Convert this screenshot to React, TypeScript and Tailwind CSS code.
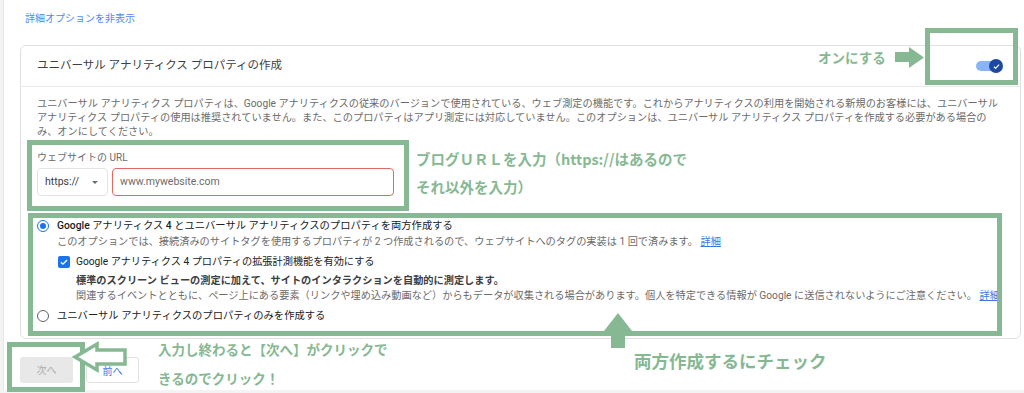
import React from "react";

const GREEN = "#86b893";

function GreenBox({ className }: { className: string }) {
  return <div className={`pointer-events-none absolute border-[5px] border-[#86b893] ${className}`} />;
}

function Radio({ checked }: { checked: boolean }) {
  return checked ? (
    <span className="flex h-[12px] w-[12px] shrink-0 items-center justify-center rounded-full border-[1.5px] border-[#1a73e8]">
      <span className="h-[6px] w-[6px] rounded-full bg-[#1a73e8]" />
    </span>
  ) : (
    <span className="h-[12px] w-[12px] shrink-0 rounded-full border-[1.5px] border-[#5f6368]" />
  );
}

export default function App() {
  return (
    <div
      className="relative h-[393px] w-[1024px] overflow-hidden bg-[#f3f3f3]"
      style={{ fontFamily: "Roboto, 'Noto Sans CJK JP', sans-serif" }}
    >
      <div className="ml-[3px] h-[390px] border-l border-[#e6e6e6] bg-white">
        <div className="pl-[21px] pt-[13px] text-[10px] leading-[12px] text-[#4b8bf5]">詳細オプションを非表示</div>

        <div className="ml-[16px] mt-[20px] w-[1001px] rounded-[6px] border border-[#e0e0e0]">
          <div className="flex h-[41px] items-center justify-between border-b border-[#ebebeb] pl-[16px] pr-[17px]">
            <span className="text-[11.5px] text-[#3c4043]">ユニバーサル アナリティクス プロパティの作成</span>
            <span className="flex items-center">
              <span className="h-[10px] w-[19px] rounded-full bg-[#8ab4f8]" />
              <span className="-ml-[6px] flex h-[14px] w-[14px] items-center justify-center rounded-full bg-[#1b4aa0]">
                <svg viewBox="0 0 12 12" className="h-[9px] w-[9px]">
                  <path d="M2.5 6.2l2.2 2.2 4.8-4.8" fill="none" stroke="white" strokeWidth="1.6" />
                </svg>
              </span>
            </span>
          </div>

          <div className="px-[16px] pb-[14px] pt-[10px]">
            <div className="whitespace-nowrap text-[10.2px] leading-[14px] text-[#6b6b6b]">
              ユニバーサル アナリティクス プロパティは、Google アナリティクスの従来のバージョンで使用されている、ウェブ測定の機能です。これからアナリティクスの利用を開始される新規のお客様には、ユニバーサル
              <br />
              アナリティクス プロパティの使用は推奨されていません。また、このプロパティはアプリ測定には対応していません。このオプションは、ユニバーサル アナリティクス プロパティを作成する必要がある場合の
              <br />
              み、オンにしてください。
            </div>

            <div className="mt-[12px] text-[10px] leading-[14px] text-[#6b6b6b]">ウェブサイトの URL</div>
            <div className="mt-[3px] flex gap-[4px]">
              <div className="flex h-[28px] w-[71px] items-center justify-between rounded-[4px] border border-[#e3e3e3] pl-[7px] pr-[9px] text-[10.5px] text-[#3c4043]">
                <span>https://</span>
                <span className="h-0 w-0 border-x-[3.5px] border-t-[3.5px] border-x-transparent border-t-[#6b6b6b]" />
              </div>
              <div className="flex h-[28px] w-[282px] items-center rounded-[4px] border border-[#e06a60] pl-[7px] text-[10.5px] text-[#6b6b6b]">
                www.mywebsite.com
              </div>
            </div>

            <div className="mt-[22px] flex gap-[8px] text-[10.3px] leading-[16px]">
              <div className="pt-[2px]">
                <Radio checked />
              </div>
              <div className="whitespace-nowrap">
                <div className="text-[#202124]">
                  <span className="font-medium">Google</span> アナリティクス <span className="font-medium">4</span>{" "}
                  とユニバーサル アナリティクスのプロパティを両方作成する
                </div>
                <div className="text-[10.2px] text-[#6b6b6b]">
                  このオプションでは、接続済みのサイトタグを使用するプロパティが 2 つ作成されるので、ウェブサイトへのタグの実装は 1 回で済みます。{" "}
                  <span className="text-[#3c78e0] underline">詳細</span>
                </div>
              </div>
            </div>

            <div className="ml-[21px] mt-[4px] flex gap-[6px] text-[10.2px]">
              <span className="mt-[2px] flex h-[12px] w-[12px] shrink-0 items-center justify-center rounded-[2px] bg-[#1a73e8]">
                <svg viewBox="0 0 12 12" className="h-[10px] w-[10px]">
                  <path d="M2.3 6.2l2.4 2.4 5-5" fill="none" stroke="white" strokeWidth="1.6" />
                </svg>
              </span>
              <div className="whitespace-nowrap">
                <div className="leading-[16px] text-[#202124]">Google アナリティクス 4 プロパティの拡張計測機能を有効にする</div>
                <div className="mt-[3px] font-bold leading-[16px] text-[#3c4043]">
                  標準のスクリーン ビューの測定に加えて、サイトのインタラクションを自動的に測定します。
                </div>
                <div className="leading-[14px] text-[#6b6b6b]">
                  関連するイベントとともに、ページ上にある要素（リンクや埋め込み動画など）からもデータが収集される場合があります。個人を特定できる情報が Google に送信されないようにご注意ください。{" "}
                  <span className="text-[#3c78e0] underline">詳細</span>
                </div>
              </div>
            </div>

            <div className="mt-[5px] flex items-center gap-[8px] text-[10.3px] leading-[16px] text-[#202124]">
              <Radio checked={false} />
              <span>ユニバーサル アナリティクスのプロパティのみを作成する</span>
            </div>
          </div>
        </div>

        <div className="ml-[16px] mt-[18px] flex gap-[13px] text-[10px]">
          <div className="flex h-[26px] w-[53px] items-center justify-center rounded-[3px] bg-[#e8e8e8] text-[#ababab]">次へ</div>
          <div className="flex h-[26px] w-[53px] items-center justify-center rounded-[3px] border border-[#e3e3e3] pt-[3px] text-[#3c78e0]">前へ</div>
        </div>
      </div>

      {/* annotations */}
      <GreenBox className="left-[925px] top-[28px] h-[57px] w-[93px]" />
      <GreenBox className="left-[27px] top-[140px] h-[71px] w-[382px]" />
      <GreenBox className="left-[28px] top-[213px] h-[123px] w-[974px]" />
      <GreenBox className="left-[7px] top-[342px] h-[50px] w-[78px]" />

      <svg className="pointer-events-none absolute left-0 top-0" width="1024" height="393">
        <polygon points="895,52 909,52 909,47 924,57.5 909,68 909,62 895,62" fill={GREEN} />
        <polygon points="618,313 632,331 625,331 625,348 611,348 611,331 604,331" fill={GREEN} />
        <polygon
          points="75,357 97,344 97,350 125,350 125,364 97,364 97,370"
          fill="white"
          stroke={GREEN}
          strokeWidth="3.5"
          strokeLinejoin="miter"
        />
      </svg>

      <div
        className="pointer-events-none absolute inset-0 font-bold text-[#86b893]"
        style={{ fontFamily: "'Noto Sans CJK JP', sans-serif" }}
      >
        <div className="absolute left-[818px] top-[47px] whitespace-nowrap text-[13.5px] leading-[20px]">オンにする</div>
        <div className="absolute left-[416px] top-[145px] whitespace-nowrap text-[14.5px] leading-[28px]">
          ブログＵＲＬを入力（https://はあるので
          <br />
          それ以外を入力）
        </div>
        <div className="absolute left-[634px] top-[349px] whitespace-nowrap text-[17.5px] leading-[24px]">両方作成するにチェック</div>
        <div className="absolute left-[158px] top-[335px] whitespace-nowrap text-[13.5px] leading-[29px]">
          入力し終わると【次へ】がクリックで
          <br />
          きるのでクリック！
        </div>
      </div>
    </div>
  );
}
